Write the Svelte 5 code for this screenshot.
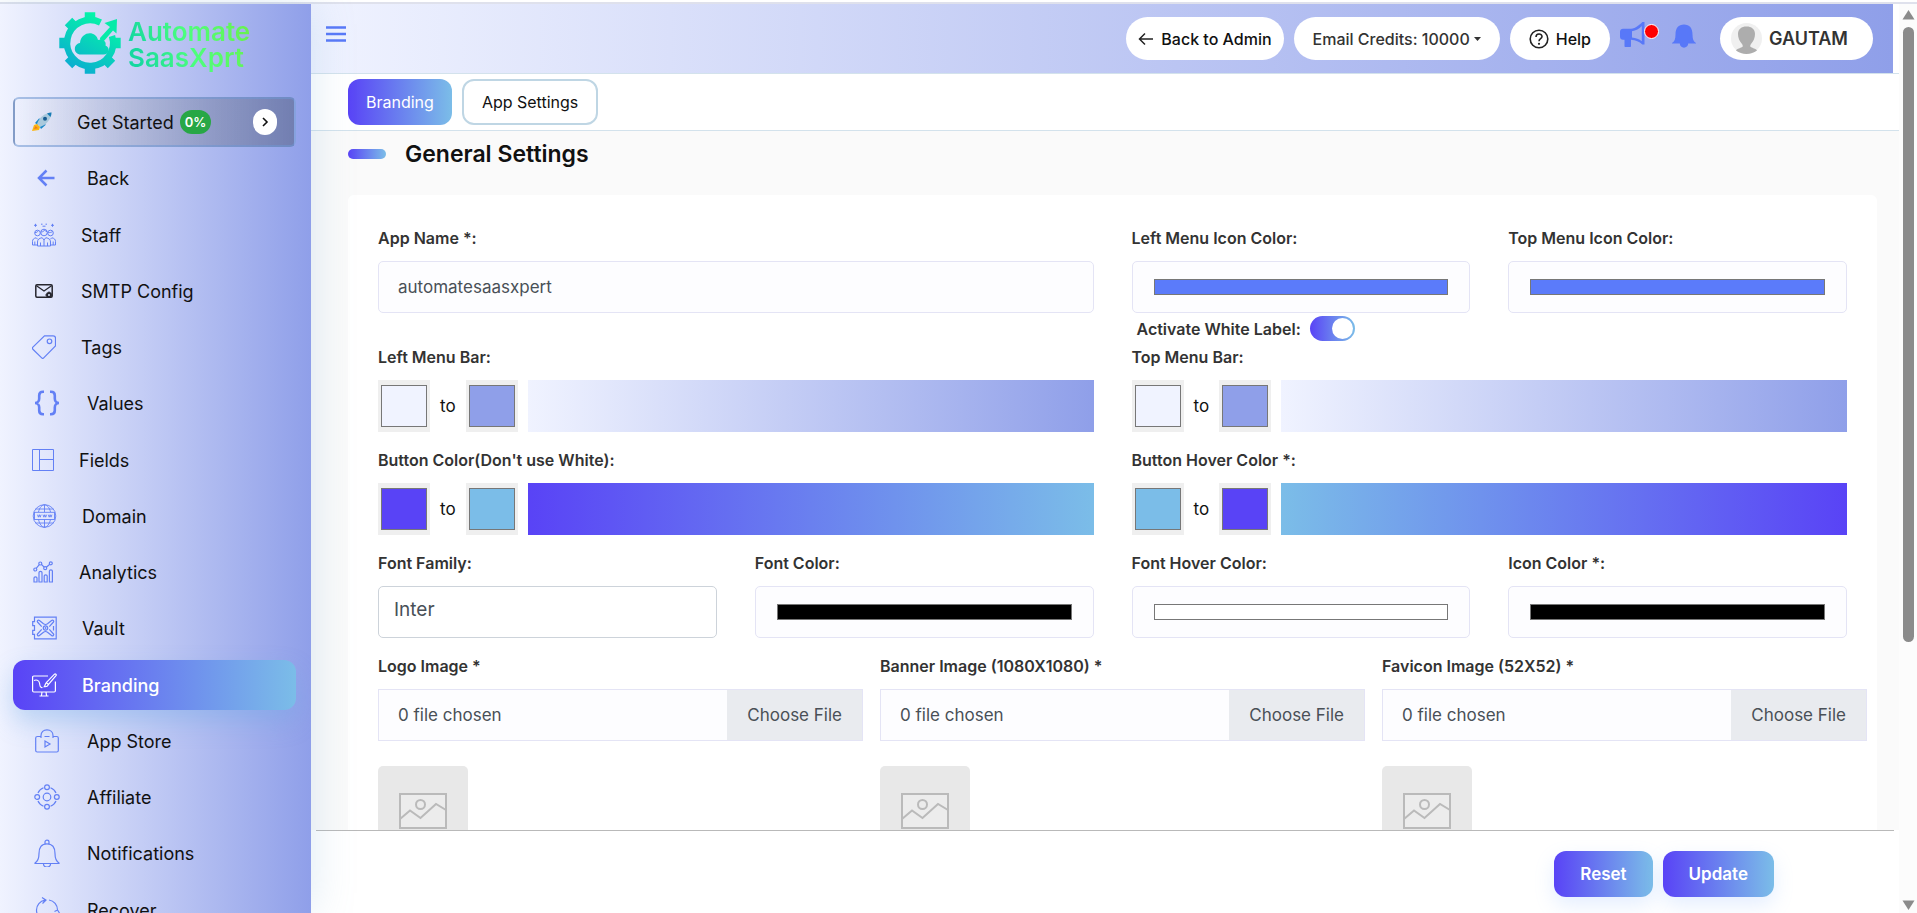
<script lang="ts">
  type MenuItem = {
    label: string;
    width: number; // icon box, the label starts right after it
    height: number;
    icon: string;
    dark?: boolean;
  };

  const menu: MenuItem[][] = [
    [
      {
        label: 'Back',
        width: 30,
        height: 24,
        icon: '<path d="M22.500 12H7.500M14.500 4.500 7 12l7.500 7.500" stroke-width="2.500"/>',
      },
    ],
    [
      {
        label: 'Staff',
        width: 24,
        height: 24,
        icon:
          '<g stroke-width="1"><circle cx="12" cy="9.500" r="3.300"/><path d="M9 9c2 0 3-1 3.500-2 .5 1 1.500 1.500 2.500 1.700"/>' +
          '<circle cx="5.500" cy="10" r="2.800"/><circle cx="18.500" cy="10" r="2.800"/><path d="M3 9.600c1.500 0 2.500-.6 3-1.600M16.200 9.400c1.500.4 3.500 0 4.300-1"/>' +
          '<path d="M5.500 23v-4c0-2.500 1.500-3.700 4.700-4.300L12 17l1.800-2.300c3.200.6 4.700 1.800 4.700 4.300v4zM8.500 19.500V23M15.500 19.500V23M12 17v6"/>' +
          '<path d="M5.500 22H.5v-3.500c0-2 1.200-3.300 3.700-3.700l1.500 1.500M18.500 22h5v-3.500c0-2-1.200-3.300-3.700-3.700l-1.500 1.500M2.800 18.500V22M21.200 18.500V22"/>' +
          '<path d="M3.500.8v3M2 2.300h3M20.500.8v3M19 2.300h3M9 1.200h1.500M13.500 1.200H15M10.500 3.200h3"/></g>',
      },
      {
        label: 'SMTP Config',
        width: 24,
        height: 24,
        dark: true,
        icon:
          '<rect x="3.800" y="5.800" width="16.400" height="12.400" rx="1.200" stroke-width="1.500"/><path d="M4.500 6.800 12 12l7.500-5.200" stroke-width="1.300"/>' +
          '<circle cx="17" cy="16" r="2" stroke-width="2"/><path d="M13.200 16h1M17 12.500v1"/>',
      },
      {
        label: 'Tags',
        width: 24,
        height: 24,
        icon:
          '<path d="M12.500.8h8.700c1.300 0 2.300 1 2.300 2.300v7.800L11.700 22.900c-.6.6-1.400.6-2 0L.9 14.200c-.6-.6-.6-1.500 0-2.100z"/><circle cx="17.500" cy="6.300" r="2.300"/>',
      },
      {
        label: 'Values',
        width: 30,
        height: 26,
        icon:
          '<path d="M12 1.800h-1C8.500 1.800 7.200 3 7.200 5.500v3C7.200 11 5.500 13 3 13c2.500 0 4.200 2 4.200 4.500v3c0 2.500 1.300 3.700 3.800 3.700h1M18 1.800h1c2.500 0 3.800 1.200 3.800 3.700v3c0 2.500 1.700 4.500 4.200 4.500-2.500 0-4.200 2-4.200 4.500v3c0 2.500-1.300 3.700-3.800 3.700h-1" stroke-width="2.600"/>',
      },
    ],
    [
      {
        label: 'Fields',
        width: 22,
        height: 22,
        icon: '<path d="M.5.5h21v21H.5zM7.500.5v21M7.500 10.500h14" stroke-width="1"/>',
      },
      {
        label: 'Domain',
        width: 25,
        height: 24,
        icon:
          '<g stroke-width="0.900"><circle cx="12.500" cy="12" r="11.300"/><path d="M12.500.8V8M12.500 15.500v7.800M6.500 8C7.500 3.500 10 .8 12.500.8S17.500 3.500 18.500 8M6.500 15.500c1 4.500 3.500 7.800 6 7.800s5-3.300 6-7.800M3.700 5h17.600M3.700 19h17.600"/><rect x="2.500" y="8.300" width="20" height="7.200"/>' +
          '<path d="m5.500 10.700.9 2.500.9-2.500.9 2.500.9-2.500M11 10.700l.9 2.500.9-2.500.9 2.500.9-2.500M16.300 10.700l.9 2.500.9-2.500.9 2.500.9-2.500"/></g>',
      },
      {
        label: 'Analytics',
        width: 22,
        height: 22,
        icon:
          '<path d="M4.200 7.300 7.300 3.700M9.500 3.500l2.700 2.700M14.300 6.200l3.500-3"/><circle cx="3.300" cy="8.500" r="1.500"/><circle cx="8.300" cy="2.500" r="1.500"/><circle cx="13.200" cy="7.200" r="1.500"/><circle cx="18.800" cy="2.300" r="1.500"/>' +
          '<path d="M2 21v-4c0-1.500 3-1.500 3 0v4zM7 21V11.500c0-1.500 3-1.500 3 0V21zM12.200 21v-6c0-1.500 3-1.500 3 0v6zM17.400 21V10c0-1.500 3-1.500 3 0v11z"/>',
      },
      {
        label: 'Vault',
        width: 25,
        height: 24,
        icon:
          '<path d="M2.500 1.200h21.700v21.600H2.500v-4.500H.7v-4h1.800V9.700H.7v-4h1.800zM21.500 10v4.500"/><circle cx="13.500" cy="12" r="2.200"/>' +
          '<path d="M9.700 10.700 5.500 6c-.8-.9.700-2.500 1.600-1.700l4.400 3.500c1.300.9 2.700.9 4 0l4.400-3.500c.9-.8 2.400.8 1.600 1.700l-4.200 4.700M9.700 13.300 5.500 18c-.8.9.7 2.500 1.600 1.700l4.400-3.500c1.300-.9 2.700-.9 4 0l4.400 3.500c.9.8 2.400-.8 1.600-1.700l-4.200-4.700"/>' +
          '<path d="M12.500 12h2M13.500 11v2" stroke-width=".8"/>',
      },
    ],
    [
      {
        label: 'Branding',
        width: 25,
        height: 24,
        icon:
          '<path d="M16 3H1.800C1 3 .6 3.500.6 4.200v13.600c0 .7.400 1.200 1.200 1.200h20.400c.8 0 1.200-.5 1.200-1.200V8.500M10 19l-.5 3.500M14 19l.5 3.500M7.500 23h9"/>' +
          '<path d="M22.500 1.200c.9-.7 2.200.5 1.500 1.400l-7.500 8.900-2.200-1.900zM14.300 9.600l2.200 1.900c-.8 1.800-2.200 2.500-4.200 2.200.8-1 .9-3 2-4.100zM2 7.500C4 6.500 7 7 7.500 10c.3 2 .5 5 3 4.500"/>',
      },
      {
        label: 'App Store',
        width: 30,
        height: 24,
        icon:
          '<path d="M8.500 7.500h-3C4.200 7.500 3.700 8 3.700 9v12.500c0 .9.500 1.500 1.500 1.500h19.600c1 0 1.500-.6 1.500-1.500V9c0-1-.5-1.500-1.500-1.500h-3.200M9 9V6.500C9 3 11.500.8 15 .8s6 2.200 6 5.700V9M12.500 7.500h5"/><path d="M13 12v6l5-3z"/>',
      },
      {
        label: 'Affiliate',
        width: 30,
        height: 26,
        icon:
          '<circle cx="15" cy="13" r="3.800"/><circle cx="15" cy="3.200" r="2.400"/><circle cx="15" cy="22.800" r="2.400"/><circle cx="5.200" cy="13" r="2.400"/><circle cx="24.800" cy="13" r="2.400"/><path d="M11.500 3.800C9 4.800 7 6.500 6 9M18.500 3.800C21 4.800 23 6.500 24 9M11.500 22.200C9 21.200 7 19.500 6 17M18.500 22.200c2.500-1 4.500-2.700 5.500-5.200"/>',
      },
      {
        label: 'Notifications',
        width: 30,
        height: 28,
        icon:
          '<path d="M7 14.500C7 8.500 9.500 4.800 15 4.800s8 3.700 8 9.700c0 5 1.500 8 4 9.500v.5H3V24c2.500-1.500 4-4.500 4-9.500zM13 4.800V3c0-2.500 4-2.500 4 0v1.800M11.500 25c0 4 7 4 7 0"/>',
      },
    ],
    [
      {
        label: 'Recover',
        width: 30,
        height: 26,
        icon:
          '<path d="M13 3.200C8 4 4.500 8 4.500 13c0 3 1 5.500 3 7.500M10 .5l4 2.700-3.500 3.300M17 3c5 .8 8.500 5 8.500 10M22.500 14.500l3-1.500 2 3"/>',
      },
    ],
  ];

  const gradients = [
    { id: 'left-bar', label: 'Left Menu Bar:', from: '#f0f3ff', to: '#8f9fe9' },
    { id: 'top-bar', label: 'Top Menu Bar:', from: '#f0f3ff', to: '#8f9fe9' },
    { id: 'button', label: "Button Color(Don't use White):", from: '#5943f6', to: '#7bbde8' },
    { id: 'hover', label: 'Button Hover Color *:', from: '#7bbde8', to: '#5943f6' },
  ];

  const uploads = [
    { id: 'logo', label: 'Logo Image *' },
    { id: 'banner', label: 'Banner Image (1080X1080) *' },
    { id: 'favicon', label: 'Favicon Image (52X52) *' },
  ];

  let active = $state('Branding');
  let appName = $state('automatesaasxpert');
  let whiteLabel = $state(true);
</script>

{#snippet colorField(id: string, label: string, value: string)}
  <div class="field">
    <label for={id}>{label}</label>
    <input {id} class="control color" type="color" {value} />
  </div>
{/snippet}

<div class="app">
  <div class="shell">
    <aside class="sidebar">
      <div class="logo">
        <svg width="62" height="62" viewBox="0 0 62 62">
          <defs>
            <linearGradient id="gear" gradientUnits="userSpaceOnUse" x1="14" y1="56" x2="44" y2="4">
              <stop offset="0" stop-color="#0baed0" />
              <stop offset="1" stop-color="#05f7a6" />
            </linearGradient>
          </defs>
          <g fill="none" stroke="url(#gear)">
            <path d="M41.500 10.500A23 23 0 1 0 53 24" stroke-width="6.500" />
            <!-- teeth: west to east by the bottom, plus the two upper ones -->
            <path
              d="M31 .3v8.500M31 53v8.700M.3 31H9M53 31h8.700M9.500 9.500l6 6M46.500 46.500l6 6M9.500 52.500l6-6"
              stroke-width="10.500"
            />
          </g>
          <path d="M41 26 51 15l-5.500-4L58 7l-.5 14.500-3.500-3-12.500 14.500z" fill="#06eba9" />
          <path
            d="M22 42.500c-8 0-8-10.500-1-11.500 1-12 16-13 18-3 6-1 8.500 2 7.500 5.500 5 2 4 9-2 9z"
            fill="url(#gear)"
          />
        </svg>
        <div class="wordmark">Automate<br />SaasXprt</div>
      </div>

      <nav>
        <a class="item start" href="#start">
          <svg width="20" height="20" viewBox="0 0 20 20">
            <path d="M3 11 7 6.500l4 1L6 13zM9 17l4.500-4-.5-4-5.500 5z" fill="#1787c9" />
            <path d="M5 12C7 6 12 1 19.500.5 19 8 14 13 8 15z" fill="#a9c9dc" />
            <path d="M15 1.500c1.500-.7 3-1 4.500-1 0 1.500-.3 3-1 4.500z" fill="#177bb5" />
            <circle cx="13" cy="6.800" r="2" fill="#185b91" />
            <path d="m0 19 2-6 3-1 3 3-1 3z" fill="#fbb616" />
            <path d="m2 17 1.500-3 2.500 2.300z" fill="#f27a1c" />
          </svg>
          <span class="start-label">Get Started <span class="badge">0%</span></span>
          <span class="go">
            <svg width="8" height="10" viewBox="0 0 8 10">
              <path d="m2 1 4 4-4 4" fill="none" stroke="#111" stroke-width="1.600" />
            </svg>
          </span>
        </a>
        {#each menu as group}
          <div class="group">
            {#each group as item}
              <a
                class="item"
                class:active={active === item.label}
                class:dark={item.dark}
                href="#{item.label}"
                onclick={() => (active = item.label)}
              >
                <svg
                  width={item.width}
                  height={item.height}
                  viewBox="0 0 {item.width} {item.height}"
                >
                  {@html item.icon}
                </svg>
                {item.label}
              </a>
            {/each}
          </div>
        {/each}
      </nav>
    </aside>

    <div class="main">
      <header>
        <button class="burger" aria-label="Toggle menu">
          <svg width="22" height="18" viewBox="0 0 22 18">
            <path d="M1 2.500h20M1 9h20M1 15.500h20" stroke="#5878f8" stroke-width="2.500" />
          </svg>
        </button>
        <div class="actions">
          <button class="pill">
            <svg width="16" height="14" viewBox="0 0 16 14">
              <path
                d="M15 7H2M7 1.500 1.500 7 7 12.500"
                fill="none"
                stroke="#222"
                stroke-width="1.500"
              />
            </svg>
            Back to Admin
          </button>
          <button class="pill credits">
            Email Credits: 10000
            <svg width="7" height="4" viewBox="0 0 7 4"><path d="M0 0h7L3.500 4z" fill="#333" /></svg>
          </button>
          <button class="pill help">
            <svg width="20" height="20" viewBox="0 0 20 20">
              <g fill="none" stroke="#222" stroke-width="1.600">
                <circle cx="10" cy="10" r="8.800" />
                <path d="M7 8c0-4 6-4 6-.5 0 2.300-3 2.200-3 4.800" />
              </g>
              <circle cx="10" cy="14.800" r="1.100" fill="#222" />
            </svg>
            Help
          </button>
          <button class="bare news" aria-label="Announcements">
            <svg width="25" height="26" viewBox="0 0 25 26">
              <path
                d="M24.500 1v22.500h-2.200c-3-3-6.500-4.500-11.300-4.800V25c0 .6-.4 1-1 1H5.500c-.6 0-1-.4-1-1v-6.300H3c-1.700 0-3-1.300-3-3v-5c0-1.700 1.300-3 3-3h8C15.800 7.300 19.300 4 22.300 1zM21.800 5c-2.500 2.700-6 4.700-9.800 5.200v6.200c3.800.3 7.300 1.500 9.800 3.800z"
                fill="#5878f8"
                fill-rule="evenodd"
              />
            </svg>
            <span class="dot"></span>
          </button>
          <button class="bare bell" aria-label="Notifications">
            <svg width="24" height="24" viewBox="0 0 24 24">
              <path
                d="M0 19c2.500-1.500 3.500-4 3.500-8.500C3.500 4 6.500.5 12 .5s8.500 3.500 8.500 10c0 4.500 1 7 3.500 8.500v.5H0zM7.800 19.500h8.400c0 5.500-8.400 5.500-8.400 0z"
                fill="#5878f8"
              />
            </svg>
          </button>
          <button class="pill user">
            <svg width="31" height="31" viewBox="0 0 31 31">
              <circle cx="15.500" cy="15.500" r="15.500" fill="#f0f0f0" />
              <path
                d="M5 27.500c1-2 5-2.500 6.500-3.800.5-.5.300-1.700-.5-2.700C8.500 18 7 15 7 11c0-5 3.500-7.500 8.500-7.500S24 6 24 11c0 4-1.500 7-4 10-.8 1-1 2.200-.5 2.700C21 25 25 25.500 26 27.500 20 32 11 32 5 27.500z"
                fill="#adadad"
              />
            </svg>
            GAUTAM
          </button>
        </div>
      </header>

      <div class="tabs">
        <button class="tab primary">Branding</button>
        <button class="tab">App Settings</button>
      </div>

      <div class="content">
        <h1>General Settings</h1>

        <form class="card" id="branding">
          <div class="grid">
            <div class="field wide">
              <label for="app-name">App Name *:</label>
              <input id="app-name" class="control" type="text" bind:value={appName} />
            </div>
            {@render colorField('left-icon', 'Left Menu Icon Color:', '#5b7bfa')}
            {@render colorField('top-icon', 'Top Menu Icon Color:', '#5b7bfa')}
          </div>

          <div class="grid white-label">
            <div class="switch-row">
              <label for="white-label">Activate White Label:</label>
              <input
                id="white-label"
                class="switch"
                type="checkbox"
                role="switch"
                bind:checked={whiteLabel}
              />
            </div>
          </div>

          <div class="grid">
            {#each gradients as g}
              <div class="field wide">
                <label for="{g.id}-from">{g.label}</label>
                <div class="range">
                  <input id="{g.id}-from" class="swatch" type="color" value={g.from} />
                  <label class="to" for="{g.id}-to">to</label>
                  <input id="{g.id}-to" class="swatch" type="color" value={g.to} />
                  <div
                    class="preview"
                    style="background-image: linear-gradient(90deg, {g.from}, {g.to})"
                  ></div>
                </div>
              </div>
            {/each}

            <div class="field">
              <label for="font-family">Font Family:</label>
              <select id="font-family" class="control">
                <option>Inter</option>
              </select>
            </div>
            {@render colorField('font-color', 'Font Color:', '#000000')}
            {@render colorField('font-hover', 'Font Hover Color:', '#ffffff')}
            {@render colorField('icon-color', 'Icon Color *:', '#000000')}
          </div>

          <div class="uploads">
            {#each uploads as u}
              <div class="field">
                <label for={u.id}>{u.label}</label>
                <div class="file">
                  <span class="file-name">0 file chosen</span>
                  <span class="file-button">Choose File</span>
                  <input id={u.id} type="file" />
                </div>
                <div class="thumb">
                  <svg width="48" height="36" viewBox="0 0 48 36">
                    <g fill="none" stroke="#bababa" stroke-width="2">
                      <rect x="1" y="1" width="46" height="34" fill="#ececec" />
                      <circle cx="21.500" cy="11.500" r="4.500" />
                      <path d="m1 26 10-8.500L21.500 25 37 11l10 6" />
                    </g>
                  </svg>
                </div>
              </div>
            {/each}
          </div>
        </form>
      </div>

      <footer>
        <button class="submit" type="reset" form="branding">Reset</button>
        <button class="submit" type="button">Update</button>
      </footer>
    </div>

    <div class="scrollbar" aria-hidden="true">
      <svg width="13" height="10" viewBox="0 0 13 10"><path d="M6.500 0 12.500 9.500H.5z" /></svg>
      <div class="track"><div class="thumb-bar"></div></div>
      <svg width="13" height="10" viewBox="0 0 13 10"><path d="M.5.5h12l-6 9.500z" /></svg>
    </div>
  </div>
</div>

<style>
  :global(body) {
    background: #fff;
  }
  * {
    box-sizing: border-box;
  }
  .app {
    --menu: linear-gradient(90deg, #f0f3ff, #8f9fe9);
    --brand: linear-gradient(90deg, #5943f6, #7bbde8);
    --line: #d3e2ec;
    display: flex;
    flex-direction: column;
    height: 100vh;
    padding-top: 2px;
    overflow: hidden;
    font-family: Inter, sans-serif;
    font-size: 16px;
    color: #111;
  }
  button,
  input,
  select {
    font: inherit;
    color: inherit;
  }
  button {
    border: 0;
    padding: 0;
    background: none;
    cursor: pointer;
  }
  .shell {
    flex: 1;
    min-height: 0;
    display: flex;
    border-top: 2px solid #dfe1ec;
  }

  /* sidebar */
  .sidebar {
    flex: none;
    z-index: 1;
    width: 311px;
    padding: 8px 15px 0 13px;
    overflow: hidden;
    background: var(--menu);
    box-shadow: 0 0 40px rgba(120, 170, 210, 0.25);
  }
  .logo {
    display: flex;
    gap: 7px;
    height: 62px;
    margin: 0 0 23px 46px;
  }
  .wordmark {
    padding-top: 7px;
    font-size: 26px;
    font-weight: 600;
    line-height: 26px;
    background: linear-gradient(70deg, #14d8a0 10%, #4cff7c 50%, #6cf04c);
    background-clip: text;
    color: transparent;
  }
  nav,
  .group {
    display: flex;
    flex-direction: column;
    gap: 6px;
  }
  .group + .group {
    padding-top: 1px;
  }
  .item {
    flex: none;
    display: flex;
    align-items: center;
    gap: 25px;
    height: 50px;
    padding-left: 19px;
    border-radius: 12px;
    color: #111;
    font-size: 18px;
    text-decoration: none;
  }
  .item > svg {
    flex: none;
    fill: none;
    stroke: #6380f5;
    stroke-width: 1.2;
  }
  .item.dark > svg {
    stroke: #26262e;
  }
  .item.active {
    background: var(--brand);
    box-shadow: 0 12px 24px rgba(110, 170, 230, 0.35);
    color: #fff;
    font-weight: 500;
  }
  .item.active > svg {
    stroke: #fff;
  }
  .start {
    padding: 0 17px;
    border: 2px solid rgba(110, 150, 210, 0.55);
    border-radius: 6px;
    background: linear-gradient(90deg, rgba(255, 255, 255, 0.15), rgba(80, 90, 120, 0.5));
  }
  .start > svg {
    stroke: none;
  }
  .start-label {
    display: flex;
    align-items: center;
    gap: 6px;
    flex: 1;
  }
  .badge {
    padding: 0 5px;
    border-radius: 12px;
    background: #28a745;
    color: #fff;
    font-size: 13px;
    font-weight: 600;
    line-height: 24px;
  }
  .go {
    display: grid;
    place-items: center;
    width: 24px;
    height: 26px;
    border-radius: 12px;
    background: #fff;
  }

  /* top bar */
  .main {
    flex: 1;
    min-width: 0;
    display: flex;
    flex-direction: column;
  }
  header {
    flex: none;
    display: flex;
    justify-content: space-between;
    align-items: center;
    height: 69px;
    margin-right: 6px;
    padding: 0 20px 0 14px;
    background: var(--menu);
  }
  .burger {
    display: flex;
    padding-bottom: 10px;
  }
  .actions {
    display: flex;
    align-items: center;
    gap: 10px;
  }
  .pill {
    display: flex;
    align-items: center;
    justify-content: center;
    gap: 7px;
    height: 43px;
    padding: 0 12px;
    border-radius: 22px;
    background: #fff;
    font-size: 16px;
    font-weight: 500;
    white-space: nowrap;
  }
  .credits {
    gap: 4px;
    padding: 0 19px;
    color: #333;
  }
  .help {
    padding: 0 19px;
  }
  .bare {
    position: relative;
    display: flex;
    padding-bottom: 10px;
  }
  .dot {
    position: absolute;
    top: 3px;
    right: -14px;
    width: 15px;
    height: 15px;
    border: 1px solid #fff;
    border-radius: 50%;
    background: #f00;
  }
  .bell {
    margin: 0 14px 0 17px;
    padding-bottom: 6px;
  }
  .user {
    width: 153px;
    padding: 0 14px 0 0;
    color: #333;
    font-size: 18px;
    font-weight: 600;
  }

  .tabs {
    flex: none;
    display: flex;
    align-items: center;
    gap: 10px;
    height: 58px;
    padding: 0 37px;
    border-top: 1px solid var(--line);
    border-bottom: 1px solid var(--line);
  }
  .tab {
    height: 46px;
    padding: 0 18px;
    border: 2px solid #bfd6e4;
    border-radius: 12px;
    font-size: 16px;
  }
  .tab.primary {
    border: 0;
    background: var(--brand);
    color: #fff;
  }

  /* settings form */
  .content {
    flex: 1;
    min-height: 0;
    overflow: hidden;
    padding: 0 22px 0 37px;
    background: #fafafa;
  }
  h1 {
    display: flex;
    align-items: center;
    gap: 19px;
    height: 46px;
    margin: 0 0 18px;
    font-size: 23px;
    font-weight: 600;
  }
  h1::before {
    content: '';
    width: 38px;
    height: 10px;
    border-radius: 5px;
    background: var(--brand);
  }
  .card {
    padding: 33px 10px 30px 30px;
    border-radius: 6px;
    background: #fff;
  }
  .grid {
    display: grid;
    grid-template-columns: repeat(4, minmax(0, 1fr));
    gap: 18px 38px;
    margin-right: 20px;
  }
  .field {
    min-width: 0;
  }
  .wide {
    grid-column: span 2;
  }
  label {
    color: #333;
    font-size: 16px;
    font-weight: 600;
    line-height: 20px;
  }
  .field > label {
    display: block;
    margin-bottom: 13px;
  }
  .control {
    display: block;
    width: 100%;
    height: 52px;
    margin: 0;
    padding: 0 19px;
    border: 1px solid #e4e4f5;
    border-radius: 5px;
    outline: 0;
    background: #fdfdff;
    color: #495057;
    font-size: 17px;
  }
  select.control {
    appearance: none;
    padding: 0 15px 6px;
    border-color: #cdd3da;
    background: #fff;
    font-size: 19px;
  }
  input.color {
    padding: 17px 21px;
  }
  input::-webkit-color-swatch-wrapper {
    padding: 0;
  }
  input::-webkit-color-swatch {
    border: 1px solid #777;
    border-radius: 0;
  }
  .white-label {
    margin-top: 3px;
    margin-bottom: 6px;
  }
  .switch-row {
    grid-column: 3 / span 2;
    display: flex;
    align-items: center;
    gap: 9px;
    height: 25px;
    padding-left: 5px;
  }
  .switch {
    appearance: none;
    display: flex;
    width: 45px;
    height: 25px;
    margin: 0;
    padding: 2px;
    border-radius: 13px;
    background: #ccc;
    cursor: pointer;
  }
  .switch::before {
    content: '';
    width: 21px;
    height: 21px;
    border-radius: 50%;
    background: #fff;
  }
  .switch:checked {
    justify-content: flex-end;
    background: var(--brand);
  }
  .range {
    display: flex;
    align-items: center;
    gap: 10px;
  }
  .swatch {
    flex: none;
    width: 52px;
    height: 52px;
    margin: 0;
    padding: 5px 3px;
    border: 0;
    background: #efefef;
  }
  .to {
    color: #111;
    font-size: 17px;
    font-weight: 400;
  }
  .preview {
    flex: 1;
    height: 52px;
  }
  .uploads {
    display: grid;
    grid-template-columns: repeat(3, minmax(0, 1fr));
    gap: 17px;
    margin-top: 18px;
  }
  .file {
    position: relative;
    display: flex;
    height: 52px;
    border: 1px solid #e4e4f5;
    background: #fdfdff;
    color: #495057;
    font-size: 17px;
    line-height: 50px;
  }
  .file input {
    position: absolute;
    inset: 0;
    width: 100%;
    opacity: 0;
    cursor: pointer;
  }
  .file-name {
    flex: 1;
    padding-left: 19px;
  }
  .file-button {
    padding: 0 20px;
    background: #e9ebef;
  }
  .thumb {
    display: grid;
    place-items: center;
    width: 90px;
    height: 90px;
    margin-top: 25px;
    border-radius: 5px;
    background: #e8e8e8;
  }

  footer {
    flex: none;
    display: flex;
    justify-content: flex-end;
    align-items: center;
    gap: 10px;
    height: 83px;
    margin: 0 5px;
    padding: 4px 120px 0 0;
    border-top: 1px solid #b9b9b9;
  }
  .submit {
    height: 46px;
    padding: 0 26px;
    border-radius: 12px;
    background: var(--brand);
    box-shadow: 0 8px 20px rgba(120, 170, 255, 0.2);
    color: #fff;
    font-size: 17px;
    font-weight: 600;
  }

  /* page scroll bar */
  .scrollbar {
    flex: none;
    display: flex;
    flex-direction: column;
    align-items: center;
    width: 18px;
    padding: 6px 0 3px;
    background: #fcfcfc;
    fill: #8b8b8b;
  }
  .track {
    flex: 1;
    padding: 7px 0;
  }
  .thumb-bar {
    width: 11px;
    height: 71%;
    border-radius: 6px;
    background: #8b8b8b;
  }
</style>
